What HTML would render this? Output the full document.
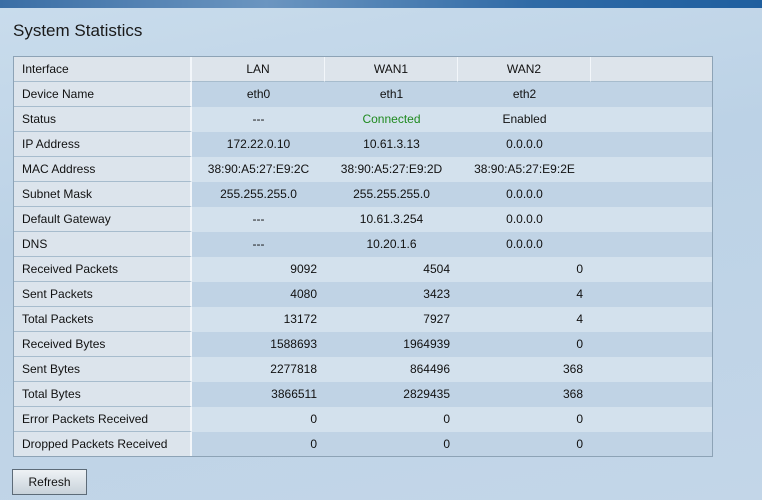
<!DOCTYPE html>
<html><head><meta charset="utf-8"><style>
html,body{margin:0;padding:0;}
body{width:762px;height:500px;overflow:hidden;font-family:"Liberation Sans",Arial,sans-serif;font-size:12px;color:#111;
background:linear-gradient(170deg,#c9dcec 0%,#bcd2e6 40%,#c3d6e8 100%);position:relative;}
.top{position:absolute;left:0;top:0;width:762px;height:8px;background:linear-gradient(90deg,#3a6ea5,#6b95c0 35%,#2f6aa6 70%,#1f5f9f);}
h1{position:absolute;left:13px;top:21px;margin:0;font-weight:normal;font-size:17px;color:#1a1a1a;}
.wrap{position:absolute;left:13px;top:56px;width:698px;border:1px solid #8da3b6;}
table{border-collapse:separate;border-spacing:0;width:698px;table-layout:fixed;}
td{height:25px;padding:0;border-bottom:1px solid #a7bccd;box-sizing:border-box;}
tr:last-child td{border-bottom:none;height:24px;}
td.l{padding-left:8px;background:#dce4ec;border-right:2px solid #f2f6fa;}
td.c{text-align:center;}
td.r{text-align:right;padding-right:8px;}
tr.h td{background:#dde4eb;}
tr.h td.c{border-right:1px solid #f2f6fa;}
tr.d td.c,tr.d td.r,tr.d td.e{background:#c0d3e5;border-bottom-color:#c0d3e5;}
tr.w td.c,tr.w td.r,tr.w td.e{background:#d3e1ed;border-bottom-color:#d3e1ed;}
.g{color:#1f8a1f;}
.btn{position:absolute;left:12px;top:469px;width:75px;height:26px;border:1px solid #5d6b78;background:linear-gradient(#eef2f5,#c8d2da);font-size:12px;text-align:center;line-height:24px;box-sizing:border-box;}
</style></head><body>
<div class="top"></div>
<h1>System Statistics</h1>
<div class="wrap">
<table>
<colgroup><col style="width:178px"><col style="width:133px"><col style="width:133px"><col style="width:133px"><col style="width:121px"></colgroup>
<tr class="h"><td class="l">Interface</td><td class="c">LAN</td><td class="c">WAN1</td><td class="c">WAN2</td><td class="e"></td></tr>
<tr class="d"><td class="l">Device Name</td><td class="c">eth0</td><td class="c">eth1</td><td class="c">eth2</td><td class="e"></td></tr>
<tr class="w"><td class="l">Status</td><td class="c">---</td><td class="c g">Connected</td><td class="c">Enabled</td><td class="e"></td></tr>
<tr class="d"><td class="l">IP Address</td><td class="c">172.22.0.10</td><td class="c">10.61.3.13</td><td class="c">0.0.0.0</td><td class="e"></td></tr>
<tr class="w"><td class="l">MAC Address</td><td class="c">38:90:A5:27:E9:2C</td><td class="c">38:90:A5:27:E9:2D</td><td class="c">38:90:A5:27:E9:2E</td><td class="e"></td></tr>
<tr class="d"><td class="l">Subnet Mask</td><td class="c">255.255.255.0</td><td class="c">255.255.255.0</td><td class="c">0.0.0.0</td><td class="e"></td></tr>
<tr class="w"><td class="l">Default Gateway</td><td class="c">---</td><td class="c">10.61.3.254</td><td class="c">0.0.0.0</td><td class="e"></td></tr>
<tr class="d"><td class="l">DNS</td><td class="c">---</td><td class="c">10.20.1.6</td><td class="c">0.0.0.0</td><td class="e"></td></tr>
<tr class="w"><td class="l">Received Packets</td><td class="r">9092</td><td class="r">4504</td><td class="r">0</td><td class="e"></td></tr>
<tr class="d"><td class="l">Sent Packets</td><td class="r">4080</td><td class="r">3423</td><td class="r">4</td><td class="e"></td></tr>
<tr class="w"><td class="l">Total Packets</td><td class="r">13172</td><td class="r">7927</td><td class="r">4</td><td class="e"></td></tr>
<tr class="d"><td class="l">Received Bytes</td><td class="r">1588693</td><td class="r">1964939</td><td class="r">0</td><td class="e"></td></tr>
<tr class="w"><td class="l">Sent Bytes</td><td class="r">2277818</td><td class="r">864496</td><td class="r">368</td><td class="e"></td></tr>
<tr class="d"><td class="l">Total Bytes</td><td class="r">3866511</td><td class="r">2829435</td><td class="r">368</td><td class="e"></td></tr>
<tr class="w"><td class="l">Error Packets Received</td><td class="r">0</td><td class="r">0</td><td class="r">0</td><td class="e"></td></tr>
<tr class="d"><td class="l">Dropped Packets Received</td><td class="r">0</td><td class="r">0</td><td class="r">0</td><td class="e"></td></tr>
</table>
</div>
<div class="btn">Refresh</div>
</body></html>
